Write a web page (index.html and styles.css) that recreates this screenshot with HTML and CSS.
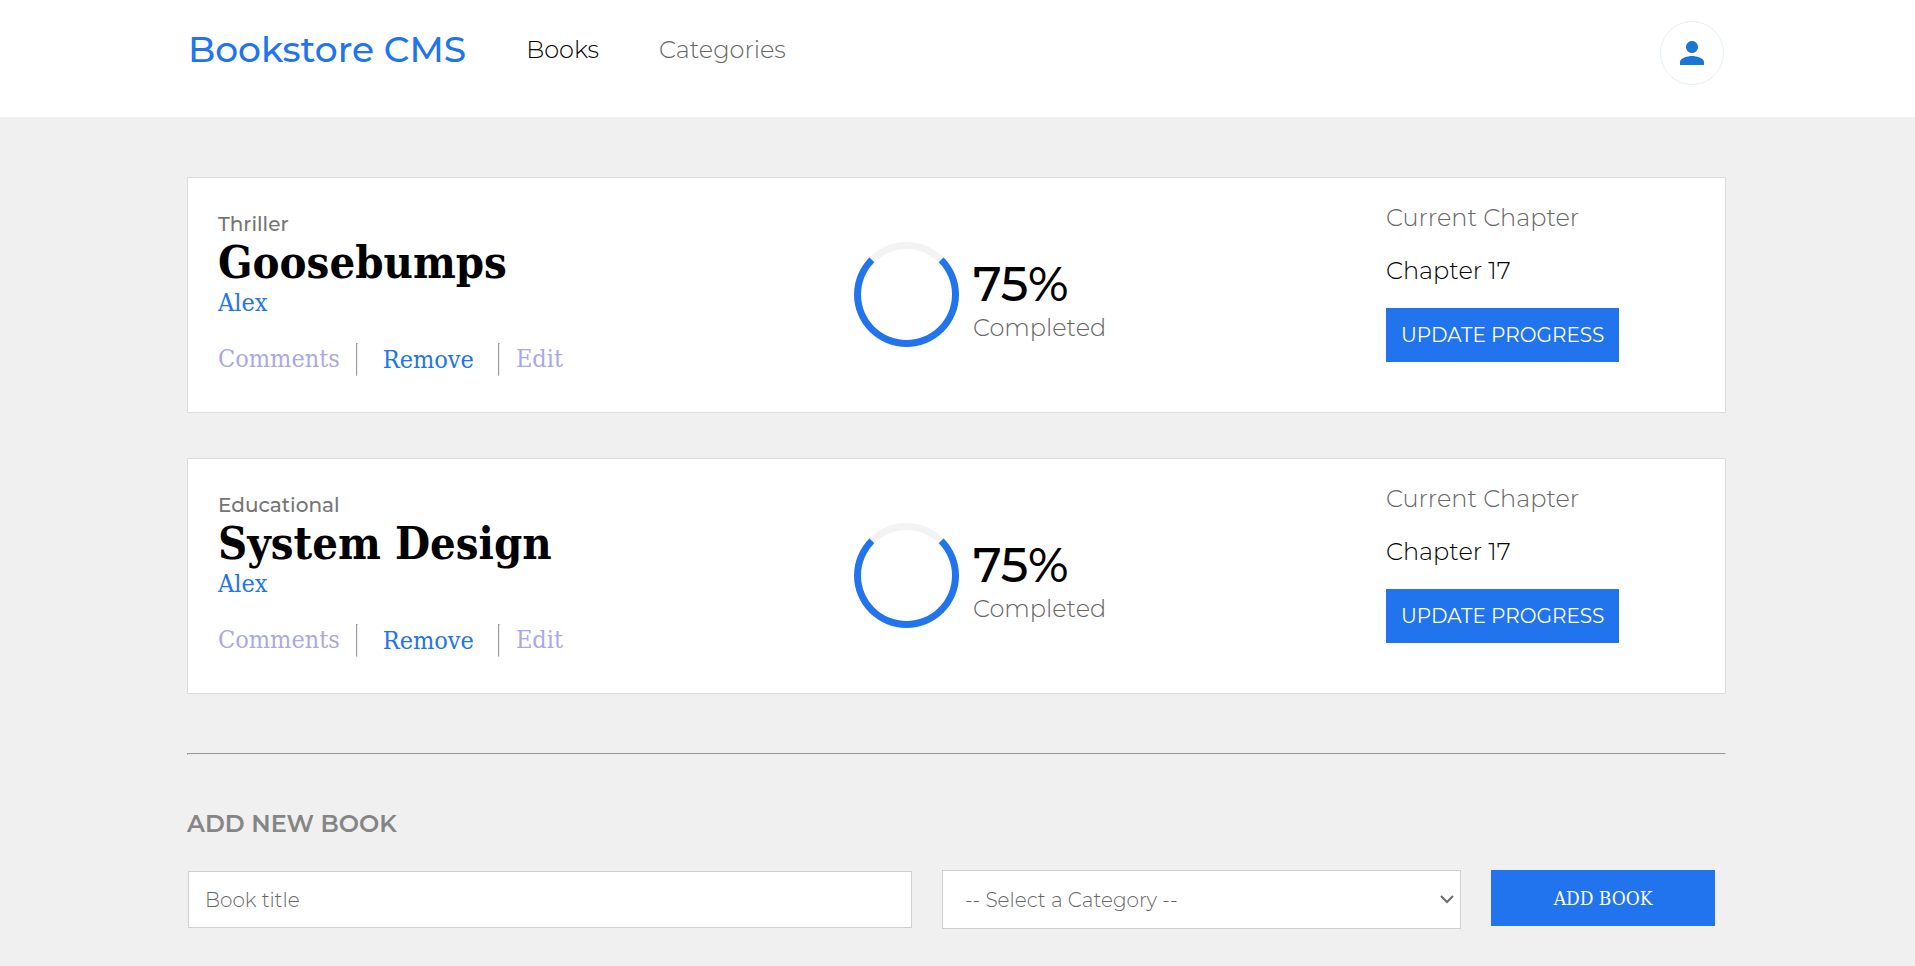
FILE: index.html
```html
<!DOCTYPE html>
<html lang="en">
<head>
<meta charset="utf-8">
<meta name="viewport" content="width=device-width, initial-scale=1">
<title>Bookstore CMS</title>
<link rel="stylesheet" href="styles.css">
</head>
<body>
<header class="header">
  <nav class="nav">
    <h1 class="logo">Bookstore CMS</h1>
    <a class="nav-link active" href="#books">Books</a>
    <a class="nav-link" href="#categories">Categories</a>
  </nav>
  <button class="avatar" type="button" aria-label="Profile">
    <svg class="avatar-icon" viewBox="0 0 24 24" aria-hidden="true"><path d="M12 12c2.21 0 4-1.79 4-4s-1.79-4-4-4-4 1.79-4 4 1.79 4 4 4zm0 2c-2.67 0-8 1.34-8 4v2h16v-2c0-2.66-5.33-4-8-4z"/></svg>
  </button>
</header>
<main class="main">
  <ul class="books">
    <li class="card">
      <div class="info">
        <p class="genre">Thriller</p>
        <h2 class="title">Goosebumps</h2>
        <p class="author">Alex</p>
        <div class="actions">
          <button class="action" type="button">Comments</button>
          <hr class="divider">
          <button class="action remove" type="button">Remove</button>
          <hr class="divider">
          <button class="action" type="button">Edit</button>
        </div>
      </div>
      <div class="progress">
        <div class="ring"></div>
        <div class="progress-text">
          <p class="percent">75%</p>
          <p class="completed">Completed</p>
        </div>
      </div>
      <div class="chapter">
        <p class="chapter-label">Current Chapter</p>
        <p class="chapter-name">Chapter 17</p>
        <button class="update" type="button">UPDATE PROGRESS</button>
      </div>
    </li>
    <li class="card">
      <div class="info">
        <p class="genre">Educational</p>
        <h2 class="title">System Design</h2>
        <p class="author">Alex</p>
        <div class="actions">
          <button class="action" type="button">Comments</button>
          <hr class="divider">
          <button class="action remove" type="button">Remove</button>
          <hr class="divider">
          <button class="action" type="button">Edit</button>
        </div>
      </div>
      <div class="progress">
        <div class="ring"></div>
        <div class="progress-text">
          <p class="percent">75%</p>
          <p class="completed">Completed</p>
        </div>
      </div>
      <div class="chapter">
        <p class="chapter-label">Current Chapter</p>
        <p class="chapter-name">Chapter 17</p>
        <button class="update" type="button">UPDATE PROGRESS</button>
      </div>
    </li>
  </ul>
  <hr class="separator">
  <section>
    <h2 class="form-title">ADD NEW BOOK</h2>
    <form class="form">
      <input class="field" type="text" placeholder="Book title" aria-label="Book title">
      <div class="select-wrap">
        <select class="select" aria-label="Category">
          <option>-- Select a Category --</option>
        </select>
        <svg class="chevron" viewBox="0 0 14 9" aria-hidden="true"><path d="M1 1l6 6 6-6"/></svg>
      </div>
      <button class="add" type="submit">ADD BOOK</button>
    </form>
  </section>
</main>
</body>
</html>
```
FILE: styles.css
```css
:root {
  --sans: Montserrat, Inter, sans-serif;
  --slab: "Roboto Slab", "DejaVu Serif Condensed", "DejaVu Serif", serif;
  --blue: #2174ee;
  --gray: #666;
}

* {
  box-sizing: border-box;
}

body {
  margin: 0;
  background: #f0f0f0;
  color: #000;
  font-family: var(--sans);
}

h1, h2, p, ul {
  margin: 0;
  padding: 0;
}

button {
  border: 0;
  padding: 0;
  background: none;
  cursor: pointer;
}

.header {
  display: flex;
  justify-content: space-between;
  align-items: flex-start;
  padding: 21px 191px 32px 188px;
  background: #fff;
}

.nav {
  display: flex;
  align-items: center;
  gap: 60px;
  padding-top: 4px;
}

.logo {
  font-size: 36px;
  font-weight: 500;
  line-height: 48px;
  color: var(--blue);
}

.nav-link {
  padding-top: 2px;
  font-size: 24px;
  font-weight: 300;
  line-height: 32px;
  color: var(--gray);
  text-decoration: none;
}

.nav-link.active {
  color: #000;
}

.avatar {
  display: grid;
  place-items: center;
  width: 64px;
  height: 64px;
  border: 1px solid #e6f0fa;
  border-radius: 50%;
}

.avatar-icon {
  width: 36px;
  height: 36px;
  fill: #1976d2;
}

.main {
  padding: 60px 189px 36px 187px;
}

.books {
  display: grid;
  gap: 45px;
  list-style: none;
}

.card {
  display: grid;
  grid-template-columns: 636fr 532fr 309fr;
  min-height: 236px;
  padding: 0 30px;
  border: 1px solid #dcdcdc;
  background: #fff;
}

.info {
  padding-top: 34px;
}

.genre {
  font-size: 20px;
  font-weight: 500;
  line-height: 24px;
  color: #757575;
}

.title {
  font-family: var(--slab);
  font-size: 45px;
  font-weight: 700;
  line-height: 54px;
}

.author {
  font-family: var(--slab);
  font-size: 25px;
  line-height: 26px;
  color: var(--blue);
}

.actions {
  display: flex;
  align-items: center;
  margin-top: 26px;
}

.action {
  font-family: var(--slab);
  font-size: 25px;
  line-height: 32px;
  color: #aaa8e8;
}

.action.remove {
  padding: 2px 8px 0 9px;
  color: var(--blue);
}

.divider {
  height: 33px;
  margin: 0 16px;
}

.progress {
  display: flex;
  align-items: center;
  gap: 14px;
  padding-bottom: 2px;
}

.progress-text {
  padding-top: 11px;
}

.ring {
  width: 105px;
  height: 105px;
  border: 7px solid var(--blue);
  border-top-color: #f3f3f3;
  border-radius: 50%;
}

.percent {
  font-size: 48px;
  font-weight: 500;
  line-height: 56px;
}

.completed {
  font-size: 24px;
  font-weight: 300;
  line-height: 32px;
  color: var(--gray);
}

.chapter {
  padding-top: 24px;
}

.chapter-label,
.chapter-name {
  margin-bottom: 21px;
  font-size: 24px;
  font-weight: 300;
  line-height: 32px;
}

.chapter-label {
  color: var(--gray);
}

.update {
  padding: 15px;
  background: var(--blue);
  color: #fff;
  font-family: var(--sans);
  font-size: 20px;
  line-height: 24px;
}

.separator {
  margin: 59px 0 0;
}

.form-title {
  margin-top: 53px;
  font-size: 24px;
  font-weight: 600;
  line-height: 32px;
  color: #858585;
}

.form {
  display: grid;
  grid-template-columns: 725fr 520fr 224fr;
  align-items: center;
  gap: 30px;
  margin-top: 30px;
  padding: 0 11px 0 1px;
}

.field,
.select {
  width: 100%;
  border: 1px solid #cfcfcf;
  border-radius: 0;
  background: #fff;
  color: var(--gray);
  font-family: var(--sans);
  font-size: 20px;
  font-weight: 300;
}

.field {
  height: 57px;
  padding: 0 16px;
}

.field::placeholder {
  color: var(--gray);
}

.select-wrap {
  display: grid;
  align-items: center;
}

.select-wrap > * {
  grid-area: 1 / 1;
}

.select {
  height: 59px;
  padding: 0 22px;
  appearance: none;
}

.chevron {
  justify-self: end;
  width: 14px;
  height: 9px;
  margin-right: 7px;
  fill: none;
  stroke: #6b6b6b;
  stroke-width: 2;
  pointer-events: none;
}

.add {
  align-self: start;
  height: 56px;
  background: var(--blue);
  color: #fff;
  font-family: var(--slab);
  font-size: 19px;
}
```
